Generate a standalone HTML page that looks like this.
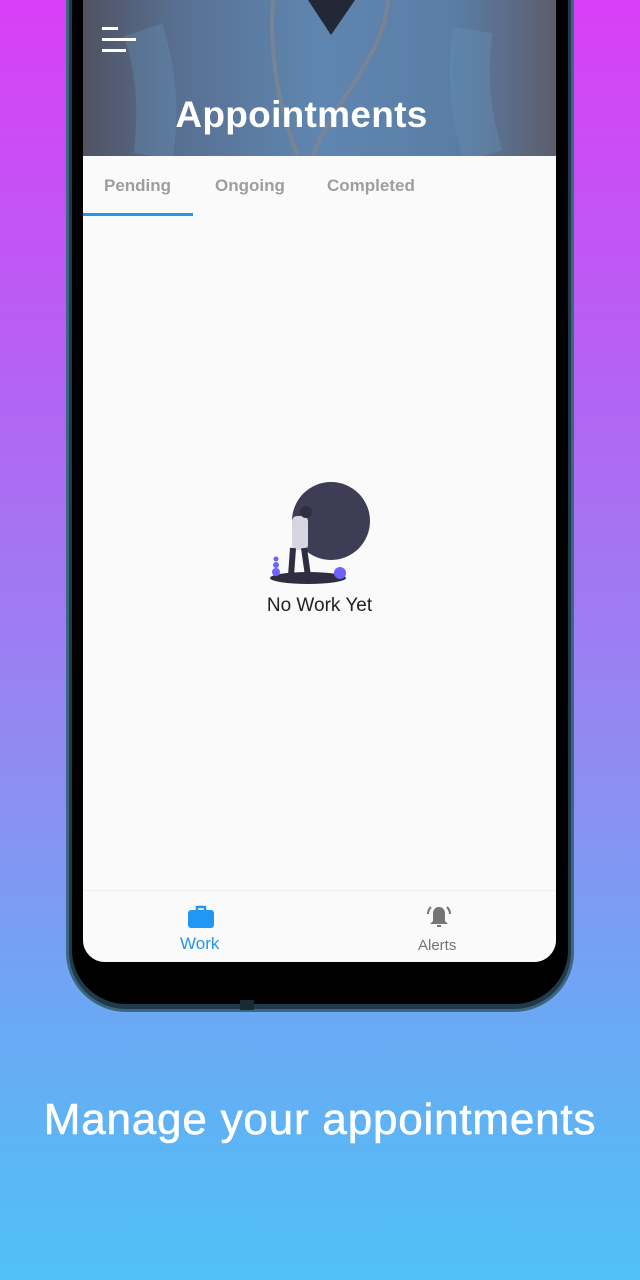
<!DOCTYPE html>
<html><head><meta charset="utf-8"><style>
*{margin:0;padding:0;box-sizing:border-box}
body{width:640px;height:1280px;overflow:hidden;font-family:"Liberation Sans",sans-serif;
background:linear-gradient(180deg,#d83ff7 0%,#b463f3 30%,#8f8cf2 60%,#6aa9f4 80%,#4fc1f6 100%);position:relative}
.frame{position:absolute;left:66px;top:-40px;width:508px;height:1052px;border-radius:0 0 60px 60px;background:#1e3a4c;border:3px solid #3d6680}
.bez{position:absolute;left:72px;top:-40px;width:496px;height:1044px;border-radius:0 0 54px 54px;background:#000}
.screen{position:absolute;left:83px;top:0;width:473px;height:962px;background:#fafafa;border-radius:0 0 22px 22px;overflow:hidden}
.hdr{position:absolute;left:0;top:0;width:473px;height:156px;background:linear-gradient(90deg,#505262 0%,#587092 20%,#5f86b0 50%,#5a7ea6 78%,#5c5d6d 100%)}
.title{position:absolute;top:94px;left:0;width:437px;text-align:center;color:#fff;font-size:37px;font-weight:bold;letter-spacing:0.3px}
.tab{position:absolute;font-size:17px;color:#9e9e9e;font-weight:bold}
.ind{position:absolute;left:0;top:213px;width:110px;height:3px;background:#2196f3}
.nav{position:absolute;top:890px;left:0;width:473px;height:72px;border-top:1px solid #eee;background:#fafafa}
.cap{position:absolute;top:1095px;left:0;width:640px;text-align:center;color:#fff;font-size:44px;font-weight:normal;letter-spacing:0.8px;-webkit-text-stroke:0.6px #fff}
</style></head><body>
<div class="frame"></div><div class="bez"></div>
<div class="screen">
 <div class="hdr">
  <svg style="position:absolute;left:0;top:0" width="473" height="156">
   <path d="M60 30 Q80 90 70 156 M390 30 Q380 90 400 156" stroke="#6891bb" stroke-width="40" fill="none" opacity=".35"/>
   <path d="M190 0 C185 60 200 120 215 156 M305 0 C300 60 250 100 230 156" stroke="#7f8590" stroke-width="4" fill="none" opacity=".8"/>
   <path d="M225 0 L248 35 L272 0" fill="#222836"/>
  </svg>
  <div style="position:absolute;left:19px;top:27px;width:16px;height:3px;background:#fff"></div>
  <div style="position:absolute;left:19px;top:38px;width:34px;height:3px;background:#fff"></div>
  <div style="position:absolute;left:19px;top:49px;width:24px;height:3px;background:#fff"></div>
  <div class="title">Appointments</div>
 </div>
 <div class="tab" style="left:21px;top:176px">Pending</div>
 <div class="tab" style="left:132px;top:176px">Ongoing</div>
 <div class="tab" style="left:244px;top:176px">Completed</div>
 <div class="ind"></div>
 <svg style="position:absolute;left:183px;top:480px" width="110" height="106">
  <ellipse cx="42" cy="98" rx="38" ry="6" fill="#2f2e41"/>
  <circle cx="65" cy="41" r="39" fill="#3f3d56"/>
  <circle cx="74" cy="93" r="6" fill="#6c63ff"/>
  <circle cx="10" cy="92" r="4" fill="#6c63ff"/><circle cx="10" cy="85" r="3" fill="#6c63ff"/><circle cx="10" cy="79" r="2.5" fill="#6c63ff"/>
  <rect x="26" y="36" width="16" height="34" rx="5" fill="#d6d6e0"/>
  <circle cx="40" cy="32" r="6" fill="#2f2e41"/>
  <path d="M27 68 L25 96 M38 68 L42 96" stroke="#2f2e41" stroke-width="6"/>
 </svg>
 <div style="position:absolute;top:595px;left:0;width:473px;text-align:center;font-size:19px;color:#222">No Work Yet</div>
 <div class="nav">
  <svg style="position:absolute;left:104px;top:14px" width="28" height="24" viewBox="0 0 28 24">
   <path d="M10 5V2h8v3" stroke="#2196f3" stroke-width="2.5" fill="none"/>
   <rect x="1" y="5" width="26" height="18" rx="3" fill="#2196f3"/>
  </svg>
  <div style="position:absolute;left:97px;top:43px;font-size:17px;color:#2196f3">Work</div>
  <svg style="position:absolute;left:342px;top:12px" width="28" height="28" viewBox="0 0 28 28">
   <path d="M14 4c-4 0-6 3-6 7v7l-3 3h18l-3-3v-7c0-4-2-7-6-7z" fill="#757575"/>
   <rect x="12" y="22" width="4" height="2" fill="#757575"/>
   <path d="M6 4 Q3 7 3 11 M22 4 Q25 7 25 11" stroke="#757575" stroke-width="2" fill="none"/>
  </svg>
  <div style="position:absolute;left:335px;top:46px;font-size:15px;color:#757575">Alerts</div>
 </div>
</div>
<div style="position:absolute;left:240px;top:1000px;width:14px;height:10px;background:#1a2a34"></div>
<div class="cap">Manage your appointments</div>
</body></html>
